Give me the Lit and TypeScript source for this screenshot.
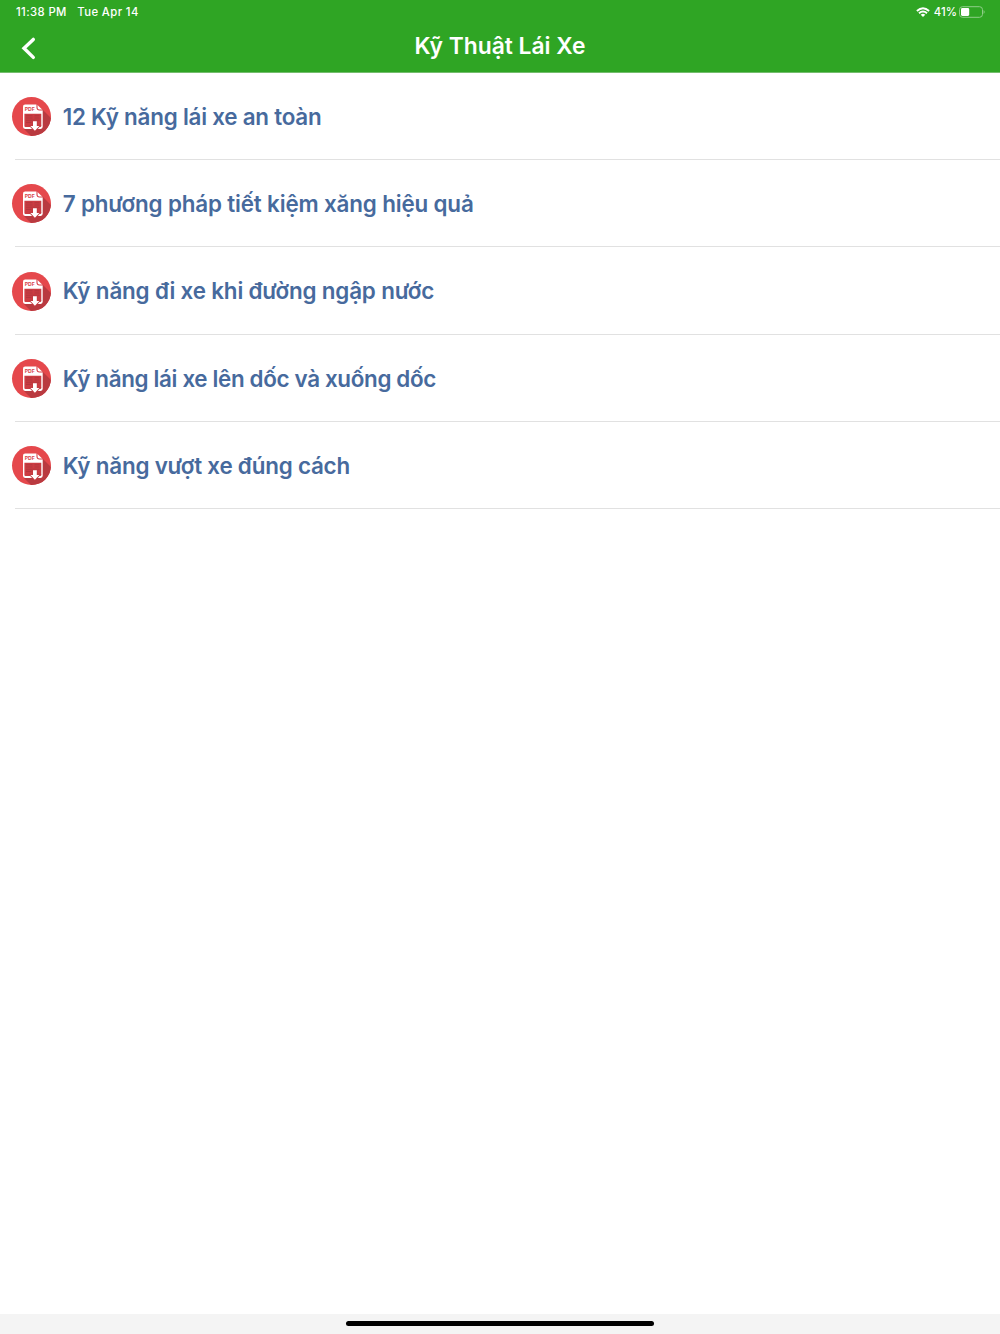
import { LitElement, html, css } from "lit";
import { customElement } from "lit/decorators.js";
import { styleMap } from "lit/directives/style-map.js";

interface Lesson {
  name: string;
  tracking: number;
}

const LESSONS: Lesson[] = [
  { name: "12 Kỹ năng lái xe an toàn", tracking: -0.22 },
  { name: "7 phương pháp tiết kiệm xăng hiệu quả", tracking: -0.15 },
  { name: "Kỹ năng đi xe khi đường ngập nước", tracking: -0.17 },
  { name: "Kỹ năng lái xe lên dốc và xuống dốc", tracking: -0.34 },
  { name: "Kỹ năng vượt xe đúng cách", tracking: -0.2 },
];

@customElement("pdf-icon")
class PdfIcon extends LitElement {
  static styles = css`
    :host { display: block; width: 40px; height: 40px; }
    .icon { display: block; width: 100%; height: 100%; }
    .label { font: 700 5px Inter, "Liberation Sans", sans-serif; fill: #d8444b; }
  `;
  render() {
    return html`<svg class="icon" viewBox="0 0 40 40">
      <defs><clipPath id="disc"><circle cx="20.5" cy="19.6" r="19.5" /></clipPath></defs>
      <circle cx="20.5" cy="19.6" r="19.5" fill="#e5484c" />
      <path clip-path="url(#disc)" d="M31 12L44 25V45H26L12.5 31.5L28 31Z" fill="#b93a40" />
      <path d="M14.1 7.4H25.9L31.7 13V29.8Q31.7 31.9 29.6 31.9H14.1Q12 31.9 12 29.8V9.5Q12 7.4 14.1 7.4Z" fill="#fff" />
      <path d="M13.4 16.7H30.3V28.9Q30.3 30 29.2 30H14.5Q13.4 30 13.4 28.9Z" fill="#cb3c42" />
      <path d="M26 7V10.6Q26 13 28.4 13H32" fill="none" stroke="#d8444b" stroke-width="1.1" />
      <path d="M15 18.8H21.5M15 21H21.5M15 23.2H28.5M15 25.4H20.5M23.5 18.8H28.5M23.5 21H28.5" stroke="#a8343b" stroke-width=".7" />
      <path d="M22 24.3H25.8V28.9H28.4L23.9 33.7L19.4 28.9H22Z" fill="#fff" stroke="#c43b41" stroke-width="1.8" paint-order="stroke" />
      <text class="label" x="13.8" y="13.8" textLength="10" lengthAdjust="spacingAndGlyphs">PDF</text>
    </svg>`;
  }
}

@customElement("app-root")
export class AppRoot extends LitElement {
  static styles = css`
    :host {
      display: flex;
      flex-direction: column;
      height: 1334px;
      background: #fff;
      font-family: Inter, "Liberation Sans", sans-serif;
    }
    .header {
      box-sizing: border-box;
      height: 73px;
      background: #2fa524;
      border-bottom: 1px solid #74bd6d;
      background-clip: padding-box;
      color: #fff;
      flex: none;
    }
    .status {
      display: flex;
      align-items: center;
      height: 24px;
      padding: 0 14px 0 16px;
      font-size: 11.3px;
      font-weight: 500;
      letter-spacing: 0.4px;
      white-space: pre;
    }
    .date { margin-left: 10.5px; flex: 1; }
    .wifi { width: 14px; height: 12px; margin-right: 4px; }
    .percent { letter-spacing: 0.1px; }
    .battery { width: 27px; height: 12px; margin-left: 2px; }
    .nav {
      display: grid;
      grid-template-columns: 60px 1fr 60px;
      height: 48px;
    }
    .back { width: 16px; height: 24px; margin: 12px 0 0 20px; }
    .title {
      margin: 0;
      text-align: center;
      font-size: 22.8px;
      line-height: 44px;
      font-weight: 600;
    }
    .list { margin: -0.4px 0 0; padding: 0; list-style: none; flex: 1; }
    .row {
      display: flex;
      height: 87.3px;
      padding-left: 11px;
    }
    .row pdf-icon { margin-top: 24.3px; flex: none; }
    .name {
      flex: 1;
      margin-left: 11.7px;
      font-size: 22.4px;
      font-weight: 600;
      line-height: 88.4px;
      color: #476a9d;
      white-space: nowrap;
    }
    .rule { height: 1px; margin: -1px 0 0 15px; background: #e1e1e1; }
    .footer {
      height: 20px;
      background: #f4f4f4;
      display: flex;
      justify-content: center;
      flex: none;
    }
    .handle { width: 308px; height: 5.4px; margin-top: 7px; border-radius: 3px; background: #000; }
  `;
  render() {
    return html`
      <header class="header">
        <div class="status">
          <span>11:38 PM</span><span class="date">Tue Apr 14</span>
          <svg class="wifi" viewBox="0 0 14 12" fill="none" stroke="#fff" stroke-width="1.9">
            <path d="M.9 5Q7-.7 13.1 5M3 7.2Q7 3.7 11 7.2" />
            <path d="M4.7 8.7Q7 6.9 9.3 8.7L7 11Z" fill="#fff" stroke="none" />
          </svg>
          <span class="percent">41%</span>
          <svg class="battery" viewBox="0 0 27 12">
            <rect x=".5" y=".7" width="23" height="10.6" rx="3" fill="none" stroke="#8fce89" />
            <rect x="2" y="2.1" width="8.2" height="7.8" rx="1.3" fill="#fff" />
            <path d="M24.6 4Q26.6 6 24.6 8Z" fill="#8fce89" />
          </svg>
        </div>
        <div class="nav">
          <svg class="back" viewBox="0 0 16 24">
            <path d="M13.3 3.4L4 12.3L13.3 21.4" fill="none" stroke="#fff" stroke-width="3.4" stroke-linecap="round" />
          </svg>
          <h1 class="title">Kỹ Thuật Lái Xe</h1>
        </div>
      </header>
      <ul class="list">
        ${LESSONS.map(
          ({ name, tracking }) => html`<li>
            <div class="row">
              <pdf-icon></pdf-icon>
              <span class="name" style=${styleMap({ letterSpacing: `${tracking}px` })}>${name}</span>
            </div>
            <div class="rule"></div>
          </li>`
        )}
      </ul>
      <footer class="footer"><div class="handle"></div></footer>
    `;
  }
}
